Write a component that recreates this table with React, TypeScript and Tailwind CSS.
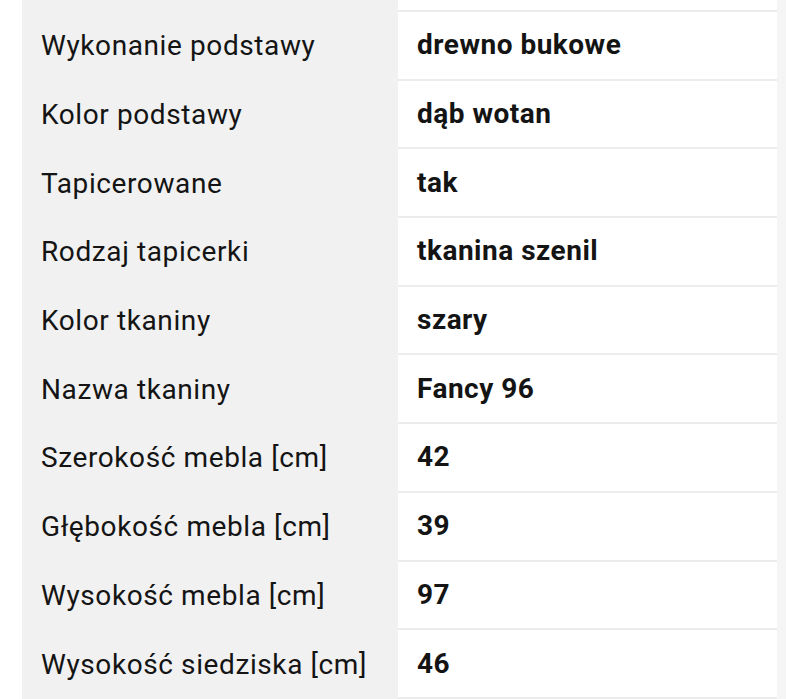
import React from 'react';

const rows: [string, string][] = [
  ['Wykonanie podstawy', 'drewno bukowe'],
  ['Kolor podstawy', 'dąb wotan'],
  ['Tapicerowane', 'tak'],
  ['Rodzaj tapicerki', 'tkanina szenil'],
  ['Kolor tkaniny', 'szary'],
  ['Nazwa tkaniny', 'Fancy 96'],
  ['Szerokość mebla [cm]', '42'],
  ['Głębokość mebla [cm]', '39'],
  ['Wysokość mebla [cm]', '97'],
  ['Wysokość siedziska [cm]', '46'],
];

export default function App() {
  return (
    <div className="w-[786px] h-[699px] overflow-hidden bg-white flex font-['Roboto',sans-serif] text-[#141414]">
      <div className="w-[22px] shrink-0 bg-white" />
      <div className="flex-1 flex flex-col">
        {/* partial row cut off at the top */}
        <div className="flex h-[12px] shrink-0">
          <div className="w-[376px] bg-[#f1f1f1]" />
          <div className="flex-1 bg-white border-b-2 border-[#ececec]" />
        </div>
        {rows.map(([label, value]) => (
          <div key={label} className="flex h-[68.7px] shrink-0">
            <div className="w-[376px] bg-[#f1f1f1] flex items-center pl-[19px] text-[28px] tracking-[0.6px]">
              {label}
            </div>
            <div className="flex-1 bg-white border-b-2 border-[#ececec] flex items-center pl-[19px] text-[28px] tracking-[0.5px] font-bold">
              {value}
            </div>
          </div>
        ))}
      </div>
      <div className="w-[9px] shrink-0 bg-[#f5f5f5]" />
    </div>
  );
}
